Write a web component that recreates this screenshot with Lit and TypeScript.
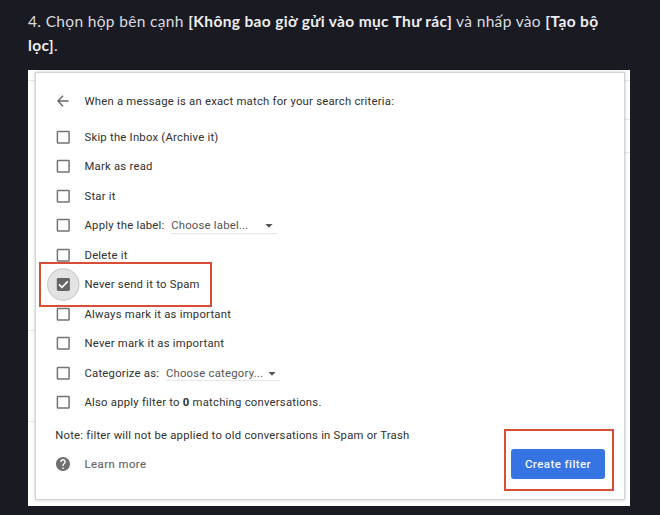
import { LitElement, html, css, svg } from "lit";
import { customElement, property } from "lit/decorators.js";

@customElement("check-box")
class CheckBox extends LitElement {
  @property({ type: Boolean }) checked = false;
  static styles = css`
    :host { display: block; width: 33px; height: 33px; flex: none; }
    svg { display: block; }
  `;
  render() {
    return html`<svg width="33" height="33" viewBox="0 0 33 33">
      ${this.checked
        ? svg`<circle cx="16.3" cy="16.5" r="15.9" fill="#e3e3e3" stroke="#c6c6c6" stroke-width="1"/>
            <rect x="9.8" y="9.9" width="13.1" height="13.1" rx="1.4" fill="#666"/>
            <path d="M12 16.4l3 3 5.8-6" fill="none" stroke="#fff" stroke-width="1.6"/>`
        : svg`<rect x="10.4" y="10.4" width="11.7" height="11.7" rx=".7" fill="none" stroke="#747474" stroke-width="1.5"/>`}
    </svg>`;
  }
}

@customElement("select-field")
class SelectField extends LitElement {
  @property() label = "";
  static styles = css`
    :host {
      display: flex; align-items: center; justify-content: space-between;
      box-sizing: border-box; height: 16px; border-bottom: 1px solid #e6e6e6; color: #555;
    }
    svg { display: block; margin-right: 4px; }
  `;
  render() {
    return html`<span>${this.label}</span>
      <svg width="8" height="4" viewBox="0 0 8 4"><path d="M.4 0h7.2L4 3.8z" fill="#555"/></svg>`;
  }
}

@customElement("app-root")
class AppRoot extends LitElement {
  static styles = css`
    :host {
      display: block; box-sizing: border-box; width: 660px; height: 515px; overflow: hidden;
      background: #191a22; padding: 9px 30px 0 28px;
    }
    .step {
      height: 61px; font: 15.5px/24px Lato, "Open Sans", sans-serif; color: #dcdce0;
      white-space: nowrap; letter-spacing: .34px;
    }
    .step b { font-weight: 700; color: #ededf0; letter-spacing: .35px; }
    .shot {
      position: relative; width: 602px; height: 436px; box-sizing: border-box;
      padding: 2px 5px 6px 7px; background: #fff;
    }
    .rule { position: absolute; height: 1px; background: #e8e8ea; }
    .left { left: 0; width: 7px; }
    .right { right: 0; width: 5px; }
    .card {
      position: relative; box-sizing: border-box; width: 590px; height: 428px; background: #fff;
      border: 1px solid #d2d3d4; box-shadow: 0 0 3px rgba(0,0,0,.22);
      padding: 13px 19px 0 10.6px;
      font: 11.3px/16px Roboto, sans-serif; letter-spacing: .23px; color: #303030; white-space: nowrap;
    }
    .row { display: flex; align-items: center; height: 29.5px; }
    .row > span, .row > select-field { padding-top: 1.4px; }
    .row check-box, .lead { margin-right: 4.9px; }
    .lead { width: 33px; display: flex; justify-content: center; flex: none; }
    .head { height: 30px; margin-bottom: 6.4px; }
    .apply { width: 106px; margin-left: 6.6px; }
    .cat { width: 114px; margin-left: 6.6px; }
    .row > .cat { padding-top: 2px; }
    .note { margin: 10.8px 0 0 8.6px; height: 16px; }
    .foot { display: flex; align-items: center; justify-content: space-between; height: 30px; margin-top: 4.9px; }
    .learn { display: flex; align-items: center; color: #666; letter-spacing: .49px; -webkit-text-stroke: .15px #666; }
    .learn span { padding-top: 1.4px; }
    button {
      width: 94px; height: 30px; border: 0; border-radius: 3px; padding: 0; background: #3574e2; color: #f4f8ff;
      font: 500 11.5px/30px Roboto, sans-serif; letter-spacing: .42px;
    }
    .mark { position: absolute; box-sizing: border-box; border: 2px solid #d94c35; }
    .m1 { left: 11px; top: 192px; width: 173px; height: 45px; }
    .m2 { left: 476px; top: 359px; width: 110px; height: 62px; }
  `;
  private item(text: unknown, checked = false, extra: unknown = "") {
    return html`<div class="row"><check-box ?checked=${checked}></check-box><span>${text}</span>${extra}</div>`;
  }
  render() {
    return html`
      <div class="step">
        <span>4. Chọn hộp bên cạnh </span><b>[Không bao giờ gửi vào mục Thư rác]</b><span> và nhấp vào </span><b>[Tạo bộ<br>lọc]</b>.
      </div>
      <div class="shot">
        <div class="rule left" style="top:10px"></div>
        <div class="rule left" style="top:260px"></div>
        <div class="rule left" style="top:351px"></div>
        <div class="rule right" style="top:10px"></div>
        <div class="rule right" style="top:49px"></div>
        <div class="rule right" style="top:82px"></div>
        <div class="card">
          <div class="row head">
            <div class="lead"><svg width="12" height="12" viewBox="0 0 12 12"><path d="M11.5 6H1M6 .8L.9 6 6 11.2" fill="none" stroke="#666" stroke-width="1.4"/></svg></div>
            <span>When a message is an exact match for your search criteria:</span>
          </div>
          ${this.item("Skip the Inbox (Archive it)")}
          ${this.item("Mark as read")}
          ${this.item("Star it")}
          ${this.item("Apply the label:", false, html`<select-field class="apply" label="Choose label..."></select-field>`)}
          ${this.item("Delete it")}
          ${this.item("Never send it to Spam", true)}
          ${this.item("Always mark it as important")}
          ${this.item("Never mark it as important")}
          ${this.item("Categorize as:", false, html`<select-field class="cat" label="Choose category..."></select-field>`)}
          ${this.item(html`Also apply filter to <b>0</b> matching conversations.`)}
          <div class="note">Note: filter will not be applied to old conversations in Spam or Trash</div>
          <div class="foot">
            <div class="learn">
              <div class="lead"><svg width="14" height="14" viewBox="2 2 20 20"><path fill="#707070" d="M12 2C6.48 2 2 6.48 2 12s4.48 10 10 10 10-4.48 10-10S17.52 2 12 2zm1 17h-2v-2h2v2zm2.07-7.75l-.9.92C13.45 12.9 13 13.5 13 15h-2v-.5c0-1.1.45-2.1 1.17-2.83l1.24-1.26c.37-.36.59-.86.59-1.41 0-1.1-.9-2-2-2s-2 .9-2 2H8c0-2.21 1.79-4 4-4s4 1.79 4 4c0 .88-.36 1.68-.93 2.25z"/></svg></div>
              <span>Learn more</span>
            </div>
            <button>Create filter</button>
          </div>
        </div>
        <div class="mark m1"></div>
        <div class="mark m2"></div>
      </div>`;
  }
}
